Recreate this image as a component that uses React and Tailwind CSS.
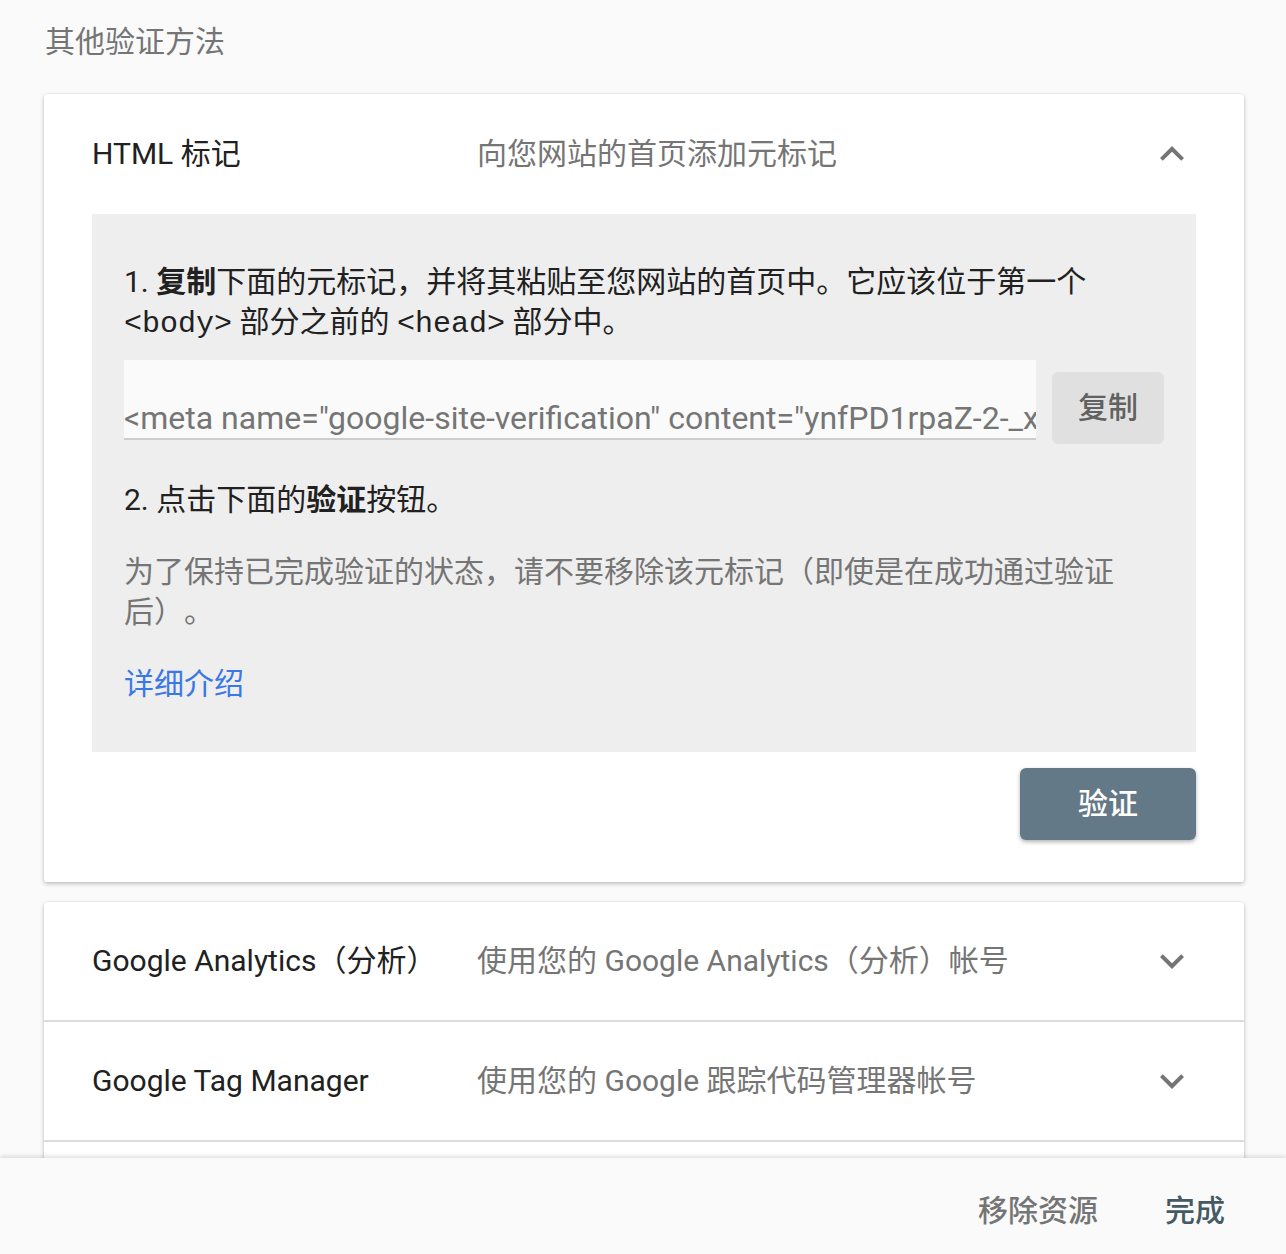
import React from 'react';

const sans = { fontFamily: 'Roboto, "Noto Sans CJK SC", sans-serif' };

function Chevron({ up }) {
  return (
    <svg width="48" height="48" viewBox="0 0 24 24" className="fill-[#757575]">
      {up ? (
        <path d="M7.41 15.41 12 10.83l4.59 4.58L18 14l-6-6-6 6z" />
      ) : (
        <path d="M7.41 8.59 12 13.17l4.59-4.58L18 10l-6 6-6-6z" />
      )}
    </svg>
  );
}

function Row({ title, desc, up, last }) {
  return (
    <div className={`h-[120px] flex items-center pl-[48px] pr-[48px] ${last ? '' : 'border-b-2 border-[#dcdcdc]'}`}>
      <div className="w-[385px] text-[30px] text-[#212121] whitespace-nowrap">{title}</div>
      <div className="flex-1 text-[30px] text-[#757575] whitespace-nowrap">{desc}</div>
      <Chevron up={up} />
    </div>
  );
}

export default function App() {
  return (
    <div className="h-[1254px] bg-[#fafafa] flex flex-col overflow-hidden [text-spacing-trim:space-all]" style={sans}>
      {/* scrolling content */}
      <div className="flex-1 overflow-hidden pl-[44px] pr-[42px] pt-[22px] text-[30px] leading-[40px]">
        <div className="pl-px text-[#757575]">其他验证方法</div>

        {/* HTML tag card */}
        <div className="mt-[32px] bg-white rounded-[3px] shadow-[0_2px_4px_rgba(0,0,0,0.22),0_0_3px_rgba(0,0,0,0.08)]">
          <Row title="HTML 标记" desc="向您网站的首页添加元标记" up last />
          <div className="mx-[48px] bg-[#eeeeee] px-[32px] pt-[48px] pb-[48px] text-[#212121]">
            <p>
              1. <b className="font-bold">复制</b>下面的元标记，并将其粘贴至您网站的首页中。它应该位于第一个{' '}
              <span className="font-['Liberation_Mono',monospace]">&lt;body&gt;</span> 部分之前的{' '}
              <span className="font-['Liberation_Mono',monospace]">&lt;head&gt;</span> 部分中。
            </p>
            <div className="mt-[16px] flex items-start gap-[16px]">
              <div className="flex-1 min-w-0 h-[80px] bg-[#fafafa] border-b-2 border-[#cccccc] flex items-end overflow-hidden">
                <div className="whitespace-nowrap text-[#757575] text-[32px] leading-[40px]">
                  &lt;meta name="google-site-verification" content="ynfPD1rpaZ-2-_xQ7bTnLkF4h0sVd3cWm9YuJe" /&gt;
                </div>
              </div>
              <button className="shrink-0 mt-[12px] w-[112px] h-[72px] rounded-[6px] bg-[#e0e0e0] text-[#616161] font-medium">
                复制
              </button>
            </div>
            <p className="mt-[36px]">
              2. 点击下面的<b className="font-bold">验证</b>按钮。
            </p>
            <p className="mt-[32px] text-[#757575]">
              为了保持已完成验证的状态，请不要移除该元标记（即使是在成功通过验证后）。
            </p>
            <p className="mt-[32px] text-[#3b78e7]">详细介绍</p>
          </div>
          <div className="flex justify-end px-[48px] pt-[16px] pb-[42px]">
            <button className="w-[176px] h-[72px] rounded-[6px] bg-[#647987] text-white font-medium shadow-[0_2px_4px_rgba(0,0,0,0.3)]">
              验证
            </button>
          </div>
        </div>

        {/* other methods */}
        <div className="mt-[20px] bg-white rounded-[3px] shadow-[0_2px_4px_rgba(0,0,0,0.22),0_0_3px_rgba(0,0,0,0.08)]">
          <Row title="Google Analytics（分析）" desc="使用您的 Google Analytics（分析）帐号" />
          <Row title="Google Tag Manager" desc="使用您的 Google 跟踪代码管理器帐号" />
          <Row title="域名提供商" desc="将 DNS 记录与 Google 关联" last />
        </div>
      </div>

      {/* footer */}
      <div className="h-[96px] shrink-0 bg-[#fafafa] shadow-[0_-2px_4px_rgba(0,0,0,0.12)] relative flex items-center justify-end pr-[61px] pt-[8px] gap-[67px] text-[30px] font-medium">
        <button className="text-[#757575]">移除资源</button>
        <button className="text-[#455a64]">完成</button>
      </div>
    </div>
  );
}
